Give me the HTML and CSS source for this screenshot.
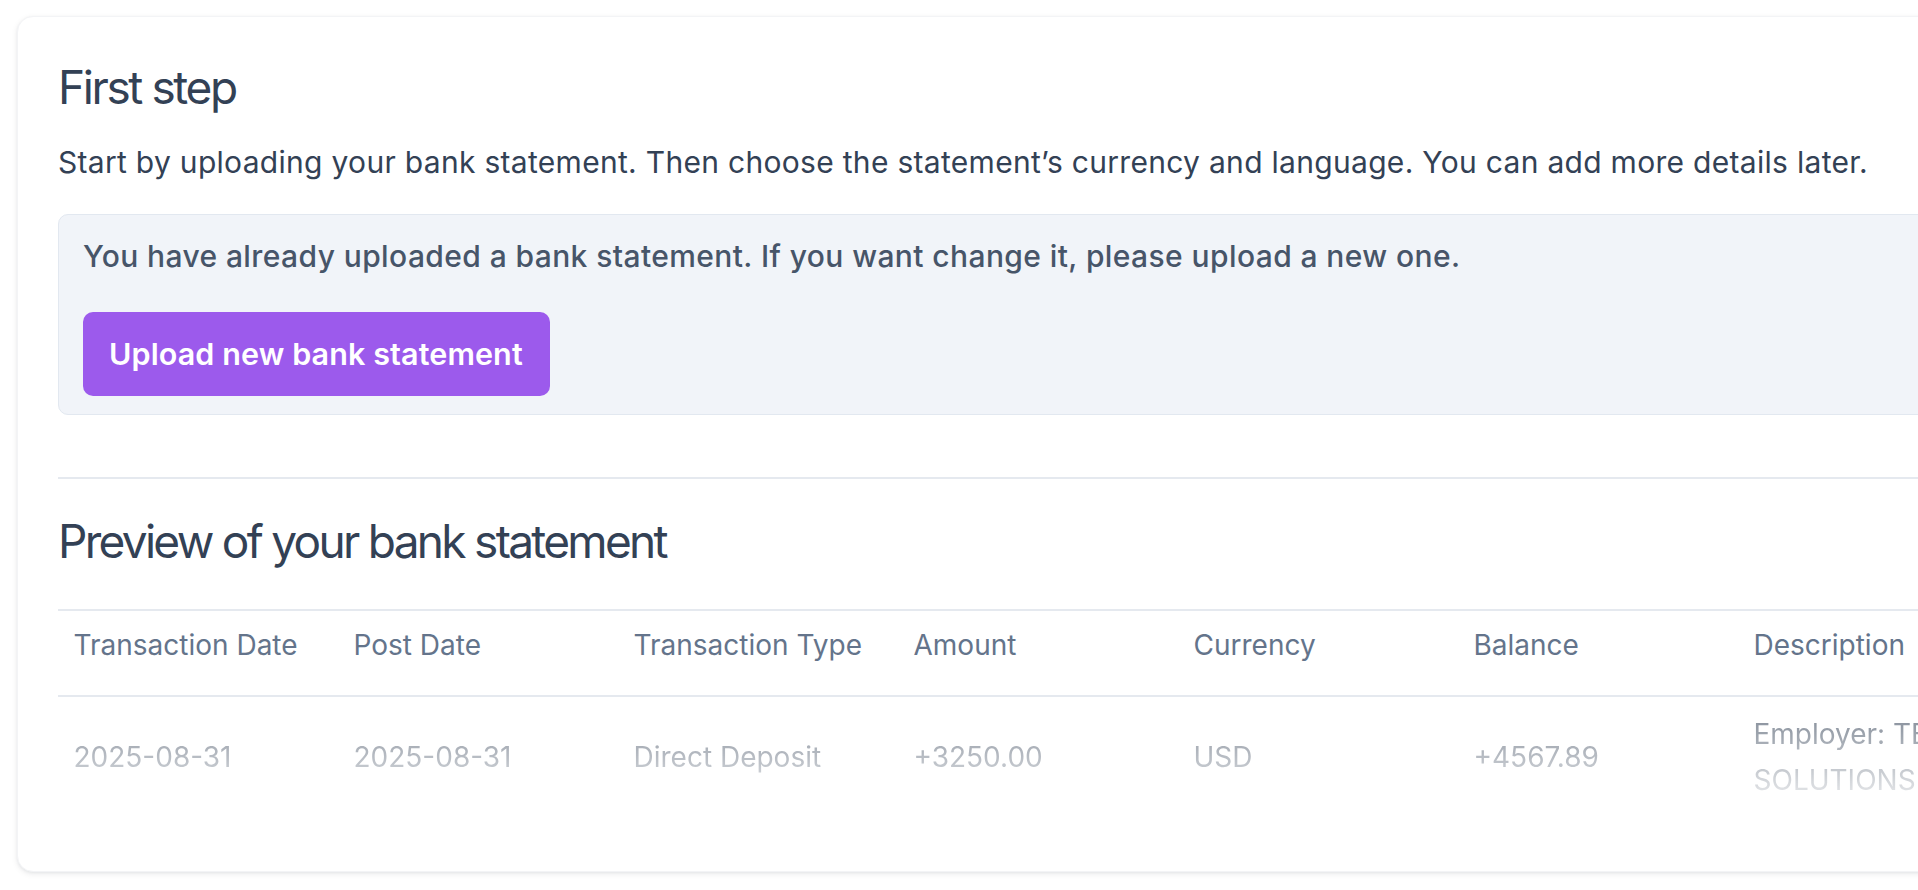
FILE: index.html
```html
<!DOCTYPE html>
<html lang="en">
<head>
<meta charset="utf-8">
<title>First step</title>
<link rel="stylesheet" href="styles.css">
</head>
<body>
<main class="page">
  <section class="card">
    <h1 class="title">First step</h1>
    <p class="lead">Start by uploading your bank statement. Then choose the statement’s currency and language. You can add more details later.</p>
    <div class="notice">
      <p class="notice-text">You have already uploaded a bank statement. If you want change it, please upload a new one.</p>
      <button class="btn" type="button">Upload new bank statement</button>
    </div>
    <hr class="divider">
    <h2 class="title title-preview">Preview of your bank statement</h2>
    <table class="preview">
      <colgroup>
        <col class="col"><col class="col"><col class="col"><col class="col"><col class="col"><col class="col"><col class="col">
      </colgroup>
      <thead>
        <tr>
          <th>Transaction Date</th>
          <th>Post Date</th>
          <th>Transaction Type</th>
          <th>Amount</th>
          <th>Currency</th>
          <th>Balance</th>
          <th>Description</th>
        </tr>
      </thead>
      <tbody>
        <tr>
          <td>2025-08-31</td>
          <td>2025-08-31</td>
          <td>Direct Deposit</td>
          <td>+3250.00</td>
          <td>USD</td>
          <td>+4567.89</td>
          <td>Employer: TECH SOLUTIONS INC</td>
        </tr>
      </tbody>
    </table>
  </section>
</main>
</body>
</html>
```

FILE: styles.css
```css
html, body {
  margin: 0;
  padding: 0;
  background: #ffffff;
  overflow: hidden;
}

body {
  font-family: Inter, "Noto Sans", "Liberation Sans", sans-serif;
  color: #334155;
}

.page {
  padding: 16px 17px;
}

.card {
  width: max-content;
  background: #ffffff;
  border: 1px solid #f3f4f6;
  border-radius: 16px;
  box-shadow: 0 2px 6px rgba(15, 23, 42, 0.08), 0 1px 3px rgba(15, 23, 42, 0.05);
  padding: 39px 40px 62px;
}

.title {
  margin: 0;
  font-size: 46px;
  line-height: 62px;
  font-weight: 400;
  color: #334155;
  letter-spacing: -2.4px;
}

.title-preview {
  margin-top: 31px;
  letter-spacing: -2.7px;
}

.lead {
  margin: 22px 0 0;
  font-size: 30px;
  line-height: 45px;
  letter-spacing: 0.3px;
  color: #334155;
}

.notice {
  margin-top: 29px;
  background: #f1f4f9;
  border: 1px solid #e2e8f0;
  border-radius: 10px;
  padding: 19px 24px 18px;
}

.notice-text {
  margin: 0;
  font-size: 30px;
  line-height: 45px;
  font-weight: 500;
  letter-spacing: 0.4px;
  color: #475569;
}

.btn {
  margin-top: 33px;
  display: inline-block;
  border: 0;
  border-radius: 10px;
  background: #9c5aec;
  color: #ffffff;
  font-family: inherit;
  font-size: 30.5px;
  line-height: 44px;
  font-weight: 600;
  letter-spacing: 0.1px;
  padding: 20px 27px 20px 26px;
  cursor: pointer;
}

.divider {
  margin: 62px 0 0;
  border: 0;
  border-top: 2px solid #e5e9ef;
  height: 0;
}

.preview {
  margin-top: 37px;
  table-layout: fixed;
  width: 1960px;
  border-collapse: collapse;
}

.col {
  width: 280px;
}

.preview th,
.preview td {
  text-align: left;
  font-size: 28px;
  line-height: 45px;
  padding: 12px 16px 27px 15.5px;
  vertical-align: middle;
}

.preview th {
  font-weight: 400;
  color: #64748b;
  border-top: 2px solid #e5e9ef;
  border-bottom: 2px solid #e5e9ef;
}

.preview td {
  line-height: 46px;
  padding-top: 14px;
  padding-bottom: 6px;
  color: #334155;
  -webkit-mask-image: linear-gradient(to bottom, rgba(0, 0, 0, 0.7), rgba(0, 0, 0, 0.05));
  mask-image: linear-gradient(to bottom, rgba(0, 0, 0, 0.7), rgba(0, 0, 0, 0.05));
}
```
